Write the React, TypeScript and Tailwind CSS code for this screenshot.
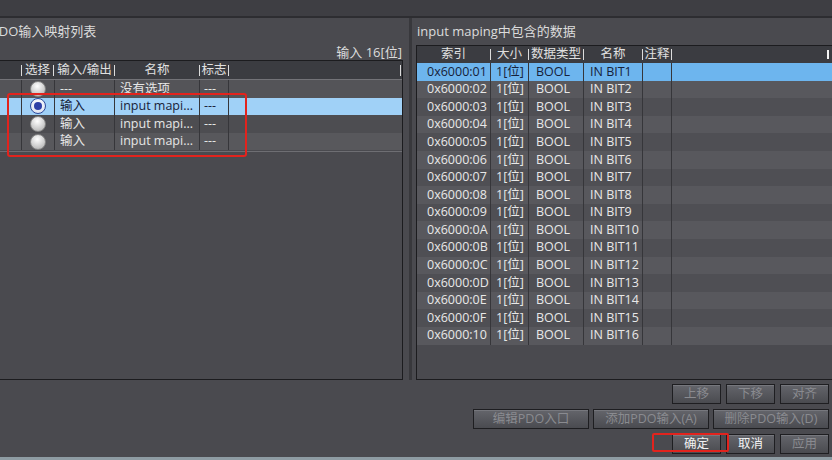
import React from "react";

const Bar = () => <span className="w-px h-[11px] bg-[#dcdcdc] shrink-0" />;

function Radio({ checked }: { checked?: boolean }) {
  if (checked) {
    return (
      <span className="w-[16px] h-[16px] rounded-full border border-[#2c4a9c] bg-[radial-gradient(circle_at_50%_35%,#ffffff,#d4dcee)] flex items-center justify-center">
        <span className="w-[8px] h-[8px] rounded-full bg-[#2d3fa6]" />
      </span>
    );
  }
  return (
    <span className="w-[16px] h-[16px] rounded-full border border-[#858585] bg-[radial-gradient(circle_at_45%_30%,#ffffff,#d0d0d0_55%,#a6a6a6)]" />
  );
}

const leftRows = [
  { io: "---", name: "没有选项", flag: "---", cls: "bg-[#545458] text-[#e6e6e6]", sel: false },
  { io: "输入", name: "input mapi...", flag: "---", cls: "bg-[#a0d1f7] text-[#18233a]", sel: true },
  { io: "输入", name: "input mapi...", flag: "---", cls: "bg-[#4d4d51] text-[#e6e6e6]", sel: false },
  { io: "输入", name: "input mapi...", flag: "---", cls: "bg-[#58585c] text-[#e6e6e6]", sel: false },
];

const hex = ["01", "02", "03", "04", "05", "06", "07", "08", "09", "0A", "0B", "0C", "0D", "0E", "0F", "10"];

function Btn({ label, active }: { label: string; active?: boolean }) {
  return (
    <div
      className={
        "h-[20px] border border-[#1e1e21] bg-linear-to-b from-[#64656b] to-[#4a4b50] flex items-center justify-center text-[12.5px] shadow-[inset_0_1px_0_#76777d] " +
        (active ? "text-[#f2f2f2]" : "text-[#8a8b90]")
      }
    >
      {label}
    </div>
  );
}

export default function App() {
  const sep = "border-r border-[#36363a]";
  return (
    <div className="w-[832px] h-[460px] bg-[#4a4a4f] flex flex-col overflow-hidden relative font-['Open_Sans','Noto_Sans_CJK_SC',sans-serif] text-[12px] leading-none">
      <div className="h-[18px] bg-[#3e3e43] border-b-2 border-[#2d2d31] shrink-0" />
      <div className="h-[362px] flex shrink-0">
        {/* left panel */}
        <div className="w-[433px] -ml-[30px] flex flex-col shrink-0">
          <div className="h-[26px] pl-[21px] flex items-center text-[13px] text-[#dcdcdc]">PDO输入映射列表</div>
          <div className="h-[16px] flex items-center justify-end pr-[1px] text-[13px] text-[#dcdcdc]">输入 16[位]</div>
          <div className="flex-1 border border-[#1c1c1f] flex flex-col">
            <div className="h-[18px] bg-[#3b3c41] flex text-[12.5px] text-[#e0e0e0]">
              <div className="w-[51px] flex items-center justify-end"><Bar /></div>
              <div className="w-[33px] flex items-center"><span className="flex-1 text-center">选择</span><span className="mr-[1px] flex"><Bar /></span></div>
              <div className="w-[60px] flex items-center"><span className="flex-1 text-center">输入/输出</span><Bar /></div>
              <div className="w-[85px] flex items-center"><span className="flex-1 text-center">名称</span><Bar /></div>
              <div className="w-[29px] flex items-center"><span className="flex-1 text-center">标志</span><Bar /></div>
              <div className="flex-1 flex items-center justify-end pr-[1px]"><Bar /></div>
            </div>
            <div className="h-px bg-[#737378]" />
            {leftRows.map((r, i) => (
              <div key={i} className={"h-[17.6px] flex items-center text-[12.5px] " + r.cls}>
                <div className={"w-[51px] h-full " + sep} />
                <div className={"w-[33px] h-full flex items-center justify-center " + sep}><Radio checked={r.sel} /></div>
                <div className={"w-[60px] h-full flex items-center pl-[5px] " + sep}>{r.io}</div>
                <div className={"w-[85px] h-full flex items-center pl-[5px] " + sep}>{r.name}</div>
                <div className={"w-[29px] h-full flex items-center pl-[4px] " + sep}>{r.flag}</div>
                <div className="flex-1 h-full" />
              </div>
            ))}
            <div className="h-px bg-[#6e6e73] mt-[1px]" />
          </div>
        </div>
        <div className="w-[6px] shrink-0" />
        <div className="w-[3px] bg-[#38383c] shrink-0" />
        <div className="w-[4px] shrink-0" />
        {/* right panel */}
        <div className="w-[420px] flex flex-col shrink-0">
          <div className="h-[27px] pl-[1px] flex items-center text-[13px] text-[#dcdcdc]">input maping中包含的数据</div>
          <div className="flex-1 border border-[#1c1c1f] flex flex-col">
            <div className="h-[17px] bg-[#3b3c41] flex text-[12.5px] text-[#e0e0e0]">
              <div className="w-[74px] flex items-center"><span className="flex-1 text-center">索引</span><Bar /></div>
              <div className="w-[38px] flex items-center"><span className="flex-1 text-center">大小</span><Bar /></div>
              <div className="w-[55px] flex items-center"><span className="flex-1 text-center">数据类型</span><Bar /></div>
              <div className="w-[59px] flex items-center"><span className="flex-1 text-center">名称</span><Bar /></div>
              <div className="w-[29px] flex items-center"><span className="flex-1 text-center">注释</span><Bar /></div>
              <div className="flex-1 flex items-center justify-end pr-[6px]"><span className="w-[2px] h-[9px] bg-[#f4f4f4]" /></div>
            </div>
            {hex.map((h, i) => {
              const cls = i === 0 ? "bg-[#6db5ee] text-[#16223a]" : i % 2 === 1 ? "bg-[#58585d] text-[#e8e8e8]" : "bg-[#4f4f54] text-[#e8e8e8]";
              return (
                <div key={h} className={"h-[17.6px] flex items-center text-[12.5px] " + cls}>
                  <div className={"w-[74px] h-full flex items-center pl-[10px] " + sep}>0x6000:{h}</div>
                  <div className={"w-[38px] h-full flex items-center pl-[5px] " + sep}>1[位]</div>
                  <div className={"w-[55px] h-full flex items-center pl-[7px] " + sep}>BOOL</div>
                  <div className={"w-[59px] h-full flex items-center pl-[6px] " + sep}>IN BIT{i + 1}</div>
                  <div className={"w-[29px] h-full " + sep} />
                  <div className="flex-1 h-full" />
                </div>
              );
            })}
          </div>
        </div>
      </div>
      {/* buttons */}
      <div className="flex flex-col items-end gap-[5px] pt-[4px] pr-[3px] shrink-0">
        <div className="grid grid-cols-[49px_49px_49px] gap-[5px]">
          <Btn label="上移" />
          <Btn label="下移" />
          <Btn label="对齐" />
        </div>
        <div className="grid grid-cols-[116px_116px_116px] gap-[4px]">
          <Btn label="编辑PDO入口" />
          <Btn label="添加PDO输入(A)" />
          <Btn label="删除PDO输入(D)" />
        </div>
        <div className="grid grid-cols-[49px_49px_49px] gap-[5px]">
          <Btn label="确定" active />
          <Btn label="取消" active />
          <Btn label="应用" />
        </div>
      </div>
      <div className="flex-1" />
      <div className="h-[3px] bg-[#8e9ca3] shrink-0" />
      {/* annotations */}
      <div className="absolute left-[7px] top-[93px] w-[240px] h-[64px] border-2 border-[#e2231d] rounded-[3px]" />
      <div className="absolute left-[652px] top-[433px] w-[77px] h-[19px] border-2 border-[#e2231d] rounded-[2px]" />
    </div>
  );
}
